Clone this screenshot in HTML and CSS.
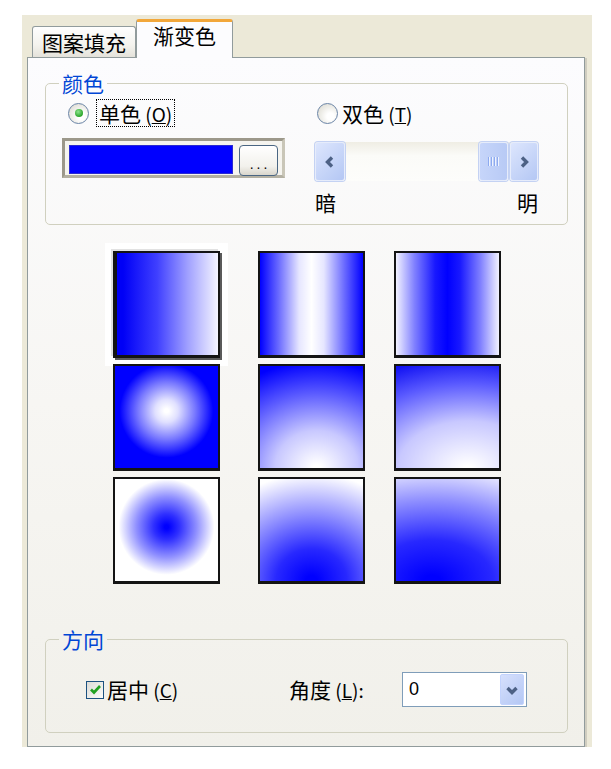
FILE: index.html
```html
<!DOCTYPE html>
<html lang="zh-CN">
<head>
    <meta charset="UTF-8">
    <meta name="viewport" content="width=device-width, initial-scale=1.0">
    <title>图案填充和渐变色</title>
    <link rel="stylesheet" href="styles.css">
</head>
<body>
    <div class="dialog">
        <div class="tabs">
            <div class="tab">图案填充</div>
            <div class="tab active">渐变色</div>
        </div>
        <div class="panel">
            <fieldset class="group color-group">
                <legend>颜色</legend>
                <div class="color-grid">
                    <label class="option one">
                        <span class="radio checked"></span>
                        <span class="focus">单色<span class="key"> (<u>O</u>)</span></span>
                    </label>
                    <label class="option two">
                        <span class="radio"></span>
                        <span>双色<span class="key"> (<u>T</u>)</span></span>
                    </label>
                    <div class="swatch-box">
                        <div class="swatch-color"></div>
                        <button class="dots">...</button>
                    </div>
                    <div class="scrollbar">
                        <div class="sb-btn">
                            <svg width="16" height="16" viewBox="0 0 16 16"><path d="M10 3.5 L5.5 8 L10 12.5" fill="none" stroke="#4d6185" stroke-width="3.4"/></svg>
                        </div>
                        <div class="sb-track">
                            <div class="sb-thumb"><span></span><span></span><span></span><span></span></div>
                        </div>
                        <div class="sb-btn">
                            <svg width="16" height="16" viewBox="0 0 16 16"><path d="M6 3.5 L10.5 8 L6 12.5" fill="none" stroke="#4d6185" stroke-width="3.4"/></svg>
                        </div>
                    </div>
                    <div class="shade-labels"><span>暗</span><span>明</span></div>
                </div>
            </fieldset>

            <div class="patterns">
                <div class="pattern selected linear"></div>
                <div class="pattern cylinder"></div>
                <div class="pattern invcylinder"></div>
                <div class="pattern spherical"></div>
                <div class="pattern hemispherical"></div>
                <div class="pattern curved"></div>
                <div class="pattern invspherical"></div>
                <div class="pattern invhemispherical"></div>
                <div class="pattern invcurved"></div>
            </div>

            <fieldset class="group dir-group">
                <legend>方向</legend>
                <div class="dir-row">
                    <label class="check">
                        <span class="box">
                            <svg width="15" height="15" viewBox="0 0 15 15"><path d="M3 7.5 L6 10.5 L12 4" fill="none" stroke="#21a121" stroke-width="2.6"/></svg>
                        </span>
                        <span>居中<span class="key"> (<u>C</u>)</span></span>
                    </label>
                    <label class="angle">角度<span class="key"> (<u>L</u>):</span></label>
                    <div class="combo">
                        <span class="combo-value">0</span>
                        <span class="combo-btn">
                            <svg width="16" height="16" viewBox="0 0 16 16"><path d="M3.5 6 L8 10.5 L12.5 6" fill="none" stroke="#4d6185" stroke-width="3.4"/></svg>
                        </span>
                    </div>
                </div>
            </fieldset>
        </div>
    </div>
</body>
</html>
```

FILE: styles.css
```css
body {
    margin: 0;
    background: #fff;
    font-family: "Noto Sans CJK SC", "Noto Sans", sans-serif;
    font-size: 21px;
    color: #000;
}
.dialog {
    box-sizing: border-box;
    width: 570px;
    height: 732px;
    margin: 15px 0 0 22px;
    padding: 4px 7px 0 5px;
    background: #ece9d8;
}

/* tabs */
.tabs {
    display: flex;
    align-items: flex-end;
    height: 38px;
    margin-left: 5px;
    position: relative;
    z-index: 1;
}
.tab {
    box-sizing: border-box;
    height: 31px;
    padding: 0 9px;
    border: 1px solid #919b9c;
    border-bottom: none;
    border-radius: 3px 3px 0 0;
    background: linear-gradient(#fefefe, #f4f3ee 60%, #e4e2da);
    line-height: 30px;
    white-space: nowrap;
}
.tab.active {
    height: 39px;
    margin-bottom: -1px;
    padding: 0 16px;
    border-top: 3px solid #f2a73a;
    background: #fcfcfe;
    line-height: 26px;
}

/* panel */
.panel {
    box-sizing: border-box;
    height: 690px;
    padding: 14px 16px 0 17px;
    border: 1px solid #919b9c;
    background: linear-gradient(#fcfcfe, #f7f6f3 50%, #f1f0ea);
    box-shadow: 2px 1px 0 #d0cdc0;
}
.group {
    margin: 0;
    padding: 0 16px;
    border: 1px solid #d0d0bf;
    border-radius: 5px;
    min-width: 0;
}
.group legend {
    padding: 0 3px;
    margin-left: -3px;
    line-height: 22px;
    color: #0046d5;
}

/* colour group */
.color-grid {
    display: grid;
    grid-template-columns: 253px 223px;
    margin-top: 4px;
    padding-bottom: 11px;
}
.option {
    display: flex;
    align-items: center;
    height: 30px;
    line-height: 22px;
}
.option.one .radio {
    margin: 0 7px 0 6px;
}
.option.two .radio {
    margin: 0 4px 0 2px;
}
.radio {
    box-sizing: border-box;
    width: 21px;
    height: 21px;
    border: 1px solid #6a84a6;
    border-radius: 50%;
    background: radial-gradient(circle at 65% 65%, #ffffff 20%, #e6e5de 70%, #d2d1c9);
    display: flex;
    align-items: center;
    justify-content: center;
}
.radio.checked::after {
    content: "";
    width: 8px;
    height: 8px;
    border-radius: 50%;
    background: radial-gradient(circle at 40% 35%, #8ee38e, #2aa52a 70%);
}
.focus {
    padding: 2px 2px 1px;
    border: 1px dotted #000;
}
.key {
    font-size: 19px;
}

.swatch-box {
    box-sizing: border-box;
    display: flex;
    gap: 6px;
    align-items: flex-start;
    width: 223px;
    height: 40px;
    margin-top: 10px;
    padding: 4px 4px 0;
    border: 3px solid;
    border-color: #9c988a #c9c6b8 #b3b0a2 #9c988a;
    background: #f5f4ef;
}
.swatch-color {
    flex: 1;
    height: 29px;
    box-sizing: border-box;
    border: 1px solid #2a2ad0;
    background: #0000ff;
}
.dots {
    box-sizing: border-box;
    width: 39px;
    height: 31px;
    padding: 0 0 3px;
    border: 1px solid #4a6683;
    border-radius: 4px;
    background: linear-gradient(#ffffff, #f2f1ec 70%, #d9d6cc);
    font-family: "Liberation Sans", sans-serif;
    font-size: 14px;
    letter-spacing: 3px;
    text-indent: 3px;
    display: flex;
    align-items: flex-end;
    justify-content: center;
}

.scrollbar {
    display: flex;
    height: 39px;
    margin-top: 14px;
    background: linear-gradient(#efede4, #fbfbf8 35%, #fdfdfb);
}
.sb-btn {
    box-sizing: border-box;
    width: 30px;
    border: 1px solid #e6ecfb;
    border-radius: 3px;
    background: linear-gradient(135deg, #dde6fd, #b4c7f4);
    box-shadow: 0 0 0 1px #c4d2f3;
    display: flex;
    align-items: center;
    justify-content: center;
}
.sb-btn:last-child {
    width: 28px;
}
.sb-track {
    flex: 1;
    display: flex;
    justify-content: flex-end;
    padding-right: 2px;
}
.sb-thumb {
    box-sizing: border-box;
    width: 29px;
    border: 1px solid #e6ecfb;
    border-radius: 3px;
    background: linear-gradient(90deg, #c6d5fa, #b8caf5);
    box-shadow: 0 0 0 1px #c4d2f3;
    display: flex;
    align-items: center;
    justify-content: center;
    gap: 1px;
}
.sb-thumb span {
    width: 1px;
    height: 9px;
    background: #8daaf0;
    border-right: 1px solid #eef3fe;
}
.shade-labels {
    grid-column: 2;
    display: flex;
    justify-content: space-between;
    margin-top: 10px;
    line-height: 22px;
}

/* gradient patterns */
.patterns {
    display: grid;
    grid-template-columns: 145px 136px 107px;
    grid-auto-rows: 107px;
    row-gap: 6px;
    margin: 26px 0 0 68px;
}
.pattern {
    box-sizing: border-box;
    width: 107px;
    height: 107px;
    border: 2px solid #141414;
    border-bottom-width: 3px;
}
.pattern.selected {
    border-left-width: 4px;
    box-shadow: 2px 2px 0 #5a5a5a, -2px -2px 0 #e2e2e2, 0 0 0 8px #fff;
}
.linear {
    background: linear-gradient(to right, #0000f6 6%, #4040ff 40%, #a0a0ff 70%, #f4f4ff);
}
.cylinder {
    background: linear-gradient(to right, #0000ff, #6a6aff 18%, #e6e6ff 38%, #fff 50%, #e6e6ff 62%, #6a6aff 82%, #0000ff);
}
.invcylinder {
    background: linear-gradient(to right, #f2f2ff, #8080ff 18%, #1818ff 38%, #0000ff 50%, #1818ff 62%, #8080ff 82%, #f2f2ff);
}
.spherical {
    background: radial-gradient(circle 52px at 50% 44%, #fff 4%, #e0e0ff 22%, #7878ff 55%, #0000ff 90%);
}
.hemispherical {
    background: radial-gradient(ellipse 115% 105% at 55% 100%, #fff 3%, #c8c8ff 35%, #5a5aff 70%, #0000ff 100%);
}
.curved {
    background: radial-gradient(ellipse 170% 115% at 70% 100%, #fff 2%, #c8c8ff 40%, #5a5aff 72%, #0000f0 100%);
}
.invspherical {
    background: radial-gradient(circle 52px at 50% 47%, #0000ff 4%, #3030ff 25%, #9090ff 58%, #fff 92%);
}
.invhemispherical {
    background: radial-gradient(ellipse 115% 105% at 50% 100%, #0000ff 5%, #2828ff 30%, #8c8cff 62%, #fff 100%);
}
.invcurved {
    background: radial-gradient(ellipse 170% 115% at 35% 100%, #0000ff 5%, #2828ff 35%, #8c8cff 68%, #f4f4ff 100%);
}

/* direction group */
.dir-group {
    margin-top: 44px;
}
.dir-row {
    display: grid;
    grid-template-columns: 203px 113px 125px;
    align-items: center;
    margin: 22px 0 0 24px;
    padding-bottom: 25px;
    line-height: 22px;
}
.check {
    display: flex;
    align-items: center;
    gap: 3px;
}
.box {
    box-sizing: border-box;
    width: 18px;
    height: 18px;
    border: 1px solid #1c5180;
    background: linear-gradient(135deg, #dcdcd7, #fbfbf9);
    display: flex;
    align-items: center;
    justify-content: center;
}
.combo {
    box-sizing: border-box;
    display: flex;
    justify-content: space-between;
    height: 35px;
    padding: 1px 2px 1px 6px;
    border: 1px solid #7f9db9;
    background: #fff;
}
.combo-value {
    line-height: 31px;
    font-family: "Liberation Sans", sans-serif;
    font-size: 18px;
}
.combo-btn {
    width: 24px;
    border-radius: 2px;
    background: linear-gradient(135deg, #d6e0fc, #b4c7f4);
    border: 1px solid #c3d3fd;
    box-sizing: border-box;
    display: flex;
    align-items: center;
    justify-content: center;
}
```
